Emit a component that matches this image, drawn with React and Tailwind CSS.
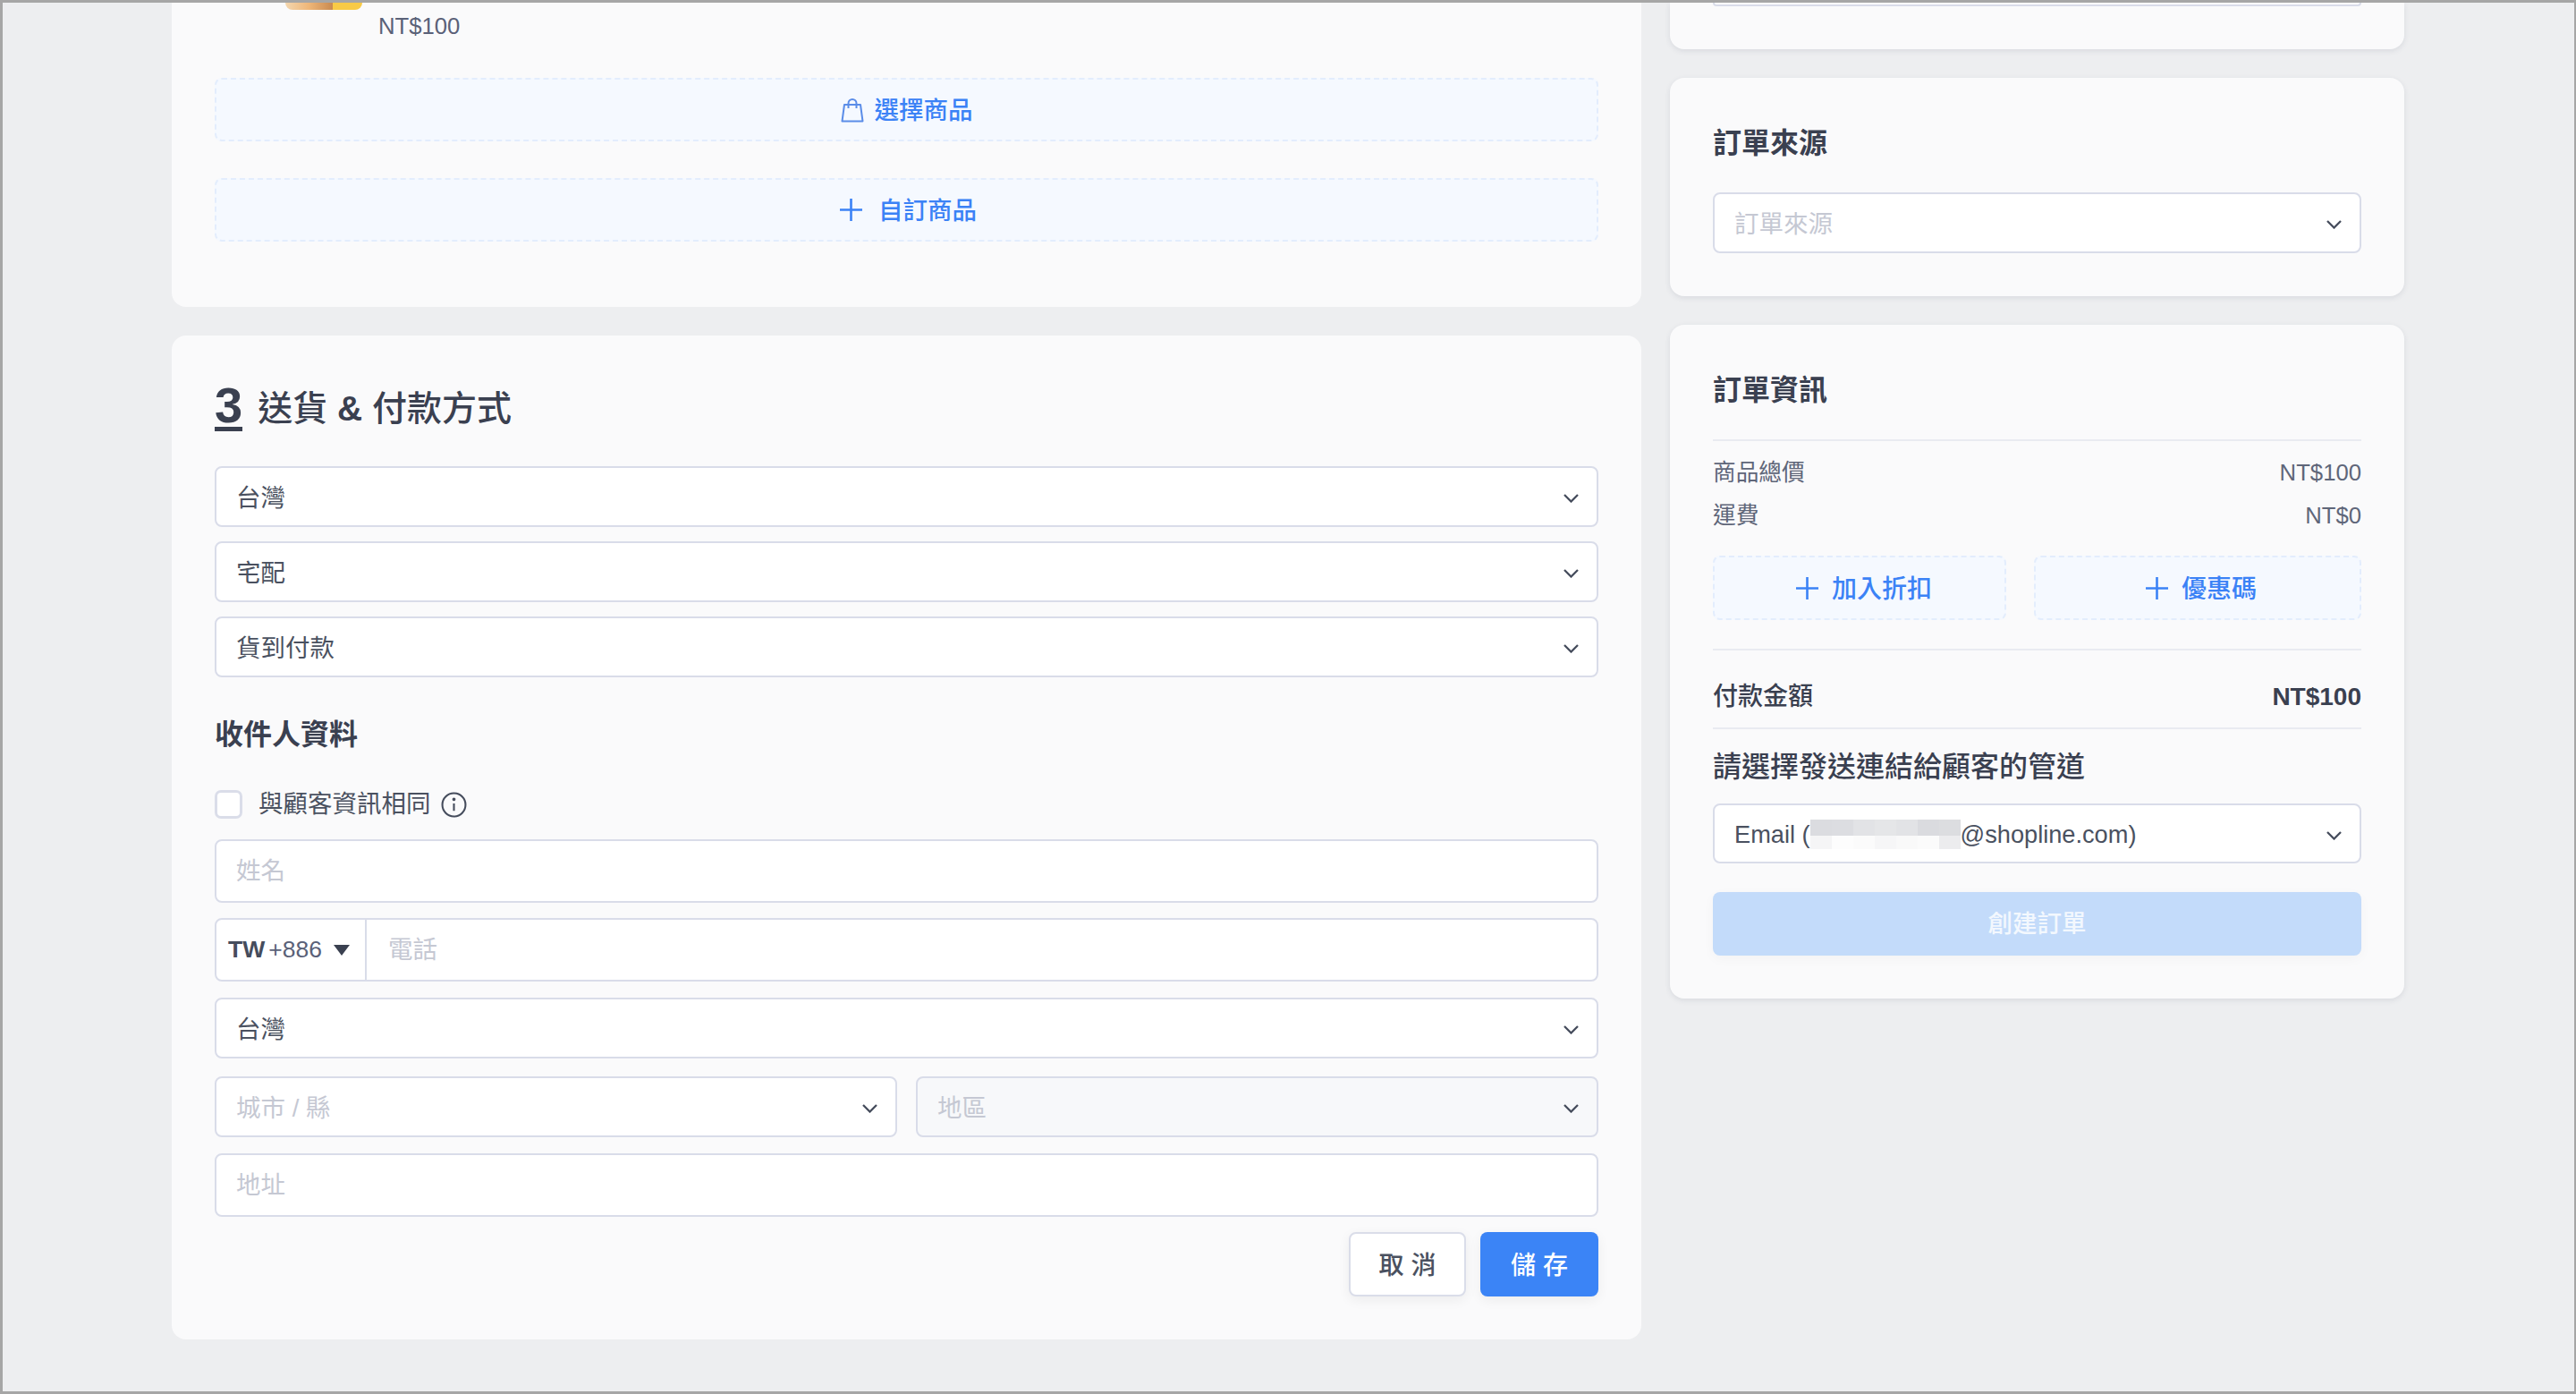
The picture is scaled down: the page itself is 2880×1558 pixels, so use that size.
const fieldBase =
  "flex items-center justify-between rounded-[8px] border-2 border-[#d9dce9] pl-[22px] pr-[20px] text-[27.5px] leading-none";

function Chevron() {
  return (
    <svg viewBox="0 0 17 10" className="mt-[4px] h-[10px] w-[17px] shrink-0" fill="none" stroke="#454c5c" strokeWidth="2.3">
      <path d="M1 1l7.5 7.5L16 1" />
    </svg>
  );
}

function PlusIcon() {
  return (
    <svg viewBox="0 0 25 25" className="h-[25px] w-[25px] shrink-0" fill="none" stroke="#3b82f6" strokeWidth="2.6">
      <path d="M12.5 0v25M0 12.5h25" />
    </svg>
  );
}

function BagIcon() {
  return (
    <svg viewBox="0 0 26 28" className="h-[28px] w-[26px] shrink-0" fill="none" stroke="#5b8de8" strokeWidth="2">
      <path d="M4 8h18l2.5 18.5h-23z" strokeLinejoin="round" />
      <path d="M8.5 12V6.5a4.5 4.5 0 0 1 9 0V12" />
    </svg>
  );
}

function Field({ label, placeholder, height = "h-[68px]", arrow = true, bg = "bg-white", textPad = "pt-[4px]", className = "" }) {
  return (
    <div className={`${fieldBase} ${height} ${bg} ${className}`}>
      <span className={`${textPad} ${placeholder ? "text-[#c5c8d3]" : "text-[#4a5160]"}`}>{label}</span>
      {arrow ? <Chevron /> : null}
    </div>
  );
}

function DashedButton({ icon, label, height = "h-[71px]", gap = "gap-[18px]", size = "text-[27.5px]", className = "" }) {
  return (
    <button
      type="button"
      className={`flex items-center justify-center rounded-[8px] border-2 border-dashed border-[#e3edfd] bg-[#f5f9ff] font-medium leading-none text-[#3b82f6] ${size} ${height} ${gap} ${className}`}
    >
      {icon || <PlusIcon />}
      <span className="pt-[3px]">{label}</span>
    </button>
  );
}

function Card({ className = "", children }) {
  return <div className={`rounded-[16px] bg-[#fafafb] ${className}`}>{children}</div>;
}

// blurred out part of the address
const mosaicTop = ["bg-[#dbdce0]", "bg-[#dcdde1]", "bg-[#e2e3e6]", "bg-[#e5e6e8]", "bg-[#e2e3e6]", "bg-[#dadbdf]", "bg-[#dcdde0]"];
const mosaicBottom = ["bg-[#f5f5f6]", "bg-[#fdfdfd]", "bg-[#fbfbfb]", "bg-[#f6f6f7]", "bg-[#f9f9f9]", "bg-[#fbfbfb]", "bg-[#ececee]"];

export default function App() {
  return (
    <div
      className="flex h-[1558px] gap-[32px] overflow-hidden border-y-[3px] border-r-2 border-l-[3px] border-[#a6a6a6] bg-[#edeef0] pl-[189px]"
      style={{ fontFamily: '"Liberation Sans", "Noto Sans CJK TC", sans-serif' }}
    >
      {/* left column */}
      <div className="flex w-[1643px] shrink-0 flex-col gap-[32px]">
        <Card className="h-[340px] rounded-t-none px-[48px]">
          <div className="flex items-start pl-[79px]">
            <div className="flex h-[8px] w-[86px] overflow-hidden rounded-b-[10px]">
              <div className="w-[53px] bg-gradient-to-r from-[#f3d6ae] via-[#eeb678] to-[#c98a50]" />
              <div className="flex-1 bg-[#f8ca46]" />
            </div>
            <span className="ml-[18px] mt-[14px] text-[25.7px] leading-[24px] text-[#5a6178]">NT$100</span>
          </div>
          <div className="mt-[46px] flex flex-col gap-[41px]">
            <DashedButton icon={<BagIcon />} label="選擇商品" gap="gap-[12px]" />
            <DashedButton label="自訂商品" className="pl-[4px]" />
          </div>
        </Card>

        <Card className="h-[1122px] px-[48px] pt-[54px]">
          <div className="flex items-start gap-[17px] text-[#3a4050]">
            <span className="border-b-[5px] border-[#3a4050] text-[56px] font-bold leading-[48px]">3</span>
            <span className="mt-[8px] text-[39px] font-medium leading-[40px]">
              送貨 <span className="font-bold">&amp;</span> 付款方式
            </span>
          </div>
          <div className="mt-[39px] flex flex-col gap-[16px]">
            <Field label="台灣" />
            <Field label="宅配" />
            <Field label="貨到付款" />
          </div>
          <h3 className="mt-[48px] text-[32px] font-semibold leading-[32px] text-[#3a4050]">收件人資料</h3>
          <div className="mt-[46px] flex items-center">
            <span className="h-[32px] w-[31px] rounded-[7px] border-[3px] border-[#dadde9] bg-white" />
            <span className="ml-[18px] text-[27.5px] leading-none text-[#4a5160]">與顧客資訊相同</span>
            <svg viewBox="0 0 28 28" className="ml-[11px] h-[29px] w-[29px]" fill="none" stroke="#454c5c" strokeWidth="2">
              <circle cx="14" cy="14" r="12.5" />
              <path d="M14 12.5v8" />
              <circle cx="14" cy="8" r="0.8" fill="#454c5c" />
            </svg>
          </div>
          <Field label="姓名" placeholder arrow={false} height="h-[71px]" textPad="" className="mt-[23px]" />
          <div className="mt-[17px] flex h-[71px] items-center rounded-[8px] border-2 border-[#d9dce9] bg-white">
            <div className="flex h-full w-[168px] items-center border-r-2 border-[#d9dce9] pl-[13px] text-[#454c5c]">
              <span className="text-[26.5px] font-bold leading-none">TW</span>
              <span className="ml-[4px] text-[26.5px] leading-none text-[#5a6178]">+886</span>
              <svg viewBox="0 0 18 12" className="ml-[13px] h-[12px] w-[18px]" fill="#3a4050">
                <path d="M0 0h18l-9 12z" />
              </svg>
            </div>
            <span className="pl-[24px] text-[27.5px] leading-none text-[#c5c8d3]">電話</span>
          </div>
          <Field label="台灣" className="mt-[18px]" />
          <div className="mt-[20px] grid grid-cols-2 gap-[21px]">
            <Field label="城市 / 縣" placeholder />
            <Field label="地區" placeholder bg="bg-[#f7f8fa]" />
          </div>
          <Field label="地址" placeholder arrow={false} height="h-[71px]" textPad="" className="mt-[18px]" />
          <div className="mt-[17px] flex justify-end gap-[16px]">
            <button
              type="button"
              className="h-[72px] w-[131px] rounded-[8px] border-2 border-[#dadde9] bg-white pl-[8px] pt-[3px] text-[28px] font-medium tracking-[8px] text-[#4a5160] shadow-[0_4px_14px_rgba(0,0,0,0.06)]"
            >
              取消
            </button>
            <button
              type="button"
              className="h-[72px] w-[132px] rounded-[8px] bg-[#3b84f6] pl-[8px] pt-[3px] text-[28px] font-medium tracking-[8px] text-white shadow-[0_4px_14px_rgba(0,0,0,0.06)]"
            >
              儲存
            </button>
          </div>
        </Card>
      </div>

      {/* right column */}
      <div className="flex w-[821px] shrink-0 flex-col gap-[32px]">
        <Card className="h-[52px] rounded-t-none px-[48px] shadow-[0_2px_6px_rgba(40,50,80,0.1)]">
          <div className="h-[4px] rounded-b-[8px] border-x-2 border-b-2 border-[#d9dce9] bg-white" />
        </Card>

        <Card className="h-[244px] px-[48px] pt-[58px] shadow-[0_2px_6px_rgba(40,50,80,0.1)]">
          <h3 className="text-[32px] font-semibold leading-[30px] text-[#3a4050]">訂單來源</h3>
          <Field label="訂單來源" placeholder className="mt-[40px]" />
        </Card>

        <Card className="h-[753px] px-[48px] pt-[58px] shadow-[0_2px_6px_rgba(40,50,80,0.1)]">
          <h3 className="text-[32px] font-semibold leading-[30px] text-[#3a4050]">訂單資訊</h3>
          <div className="mt-[40px] border-t-2 border-[#e9ebf1] pt-[18px] text-[25.7px] leading-[34px] text-[#5f6679]">
            <div className="flex justify-between">
              <span>商品總價</span>
              <span>NT$100</span>
            </div>
            <div className="mt-[14px] flex justify-between">
              <span>運費</span>
              <span>NT$0</span>
            </div>
          </div>
          <div className="mt-[28px] flex justify-between">
            <DashedButton label="加入折扣" height="h-[72px]" gap="gap-[15px]" size="text-[28px]" className="w-[328px] pl-[10px]" />
            <DashedButton label="優惠碼" height="h-[72px]" gap="gap-[15px]" size="text-[28px]" className="w-[366px] pl-[8px]" />
          </div>
          <div className="mt-[32px] flex h-[90px] items-center justify-between border-y-2 border-[#e9ebf1] pt-[17px] text-[28px] leading-none text-[#3a4050]">
            <span className="font-medium">付款金額</span>
            <span className="font-bold">NT$100</span>
          </div>
          <h3 className="mt-[24px] pt-[1px] text-[32px] font-medium leading-[34px] text-[#3a4050]">請選擇發送連結給顧客的管道</h3>
          <div className={`${fieldBase} mt-[24px] h-[67px] bg-white`}>
            <span className="flex items-center pt-[2px] text-[27.2px] text-[#4a5160]">
              Email (
              <span className="h-[33px] w-[168px] shrink-0">
                <span className="flex h-[18px]">
                  {mosaicTop.map((tile, i) => (
                    <span key={i} className={`h-full flex-1 ${tile}`} />
                  ))}
                </span>
                <span className="flex h-[15px]">
                  {mosaicBottom.map((tile, i) => (
                    <span key={i} className={`h-full flex-1 ${tile}`} />
                  ))}
                </span>
              </span>
              @shopline.com)
            </span>
            <Chevron />
          </div>
          <button
            type="button"
            className="mt-[32px] h-[71px] w-full rounded-[8px] bg-[#c3dbfa] text-[27.5px] font-medium text-white/80 shadow-[0_4px_14px_rgba(0,0,0,0.03)]"
          >
            創建訂單
          </button>
        </Card>
      </div>
    </div>
  );
}
